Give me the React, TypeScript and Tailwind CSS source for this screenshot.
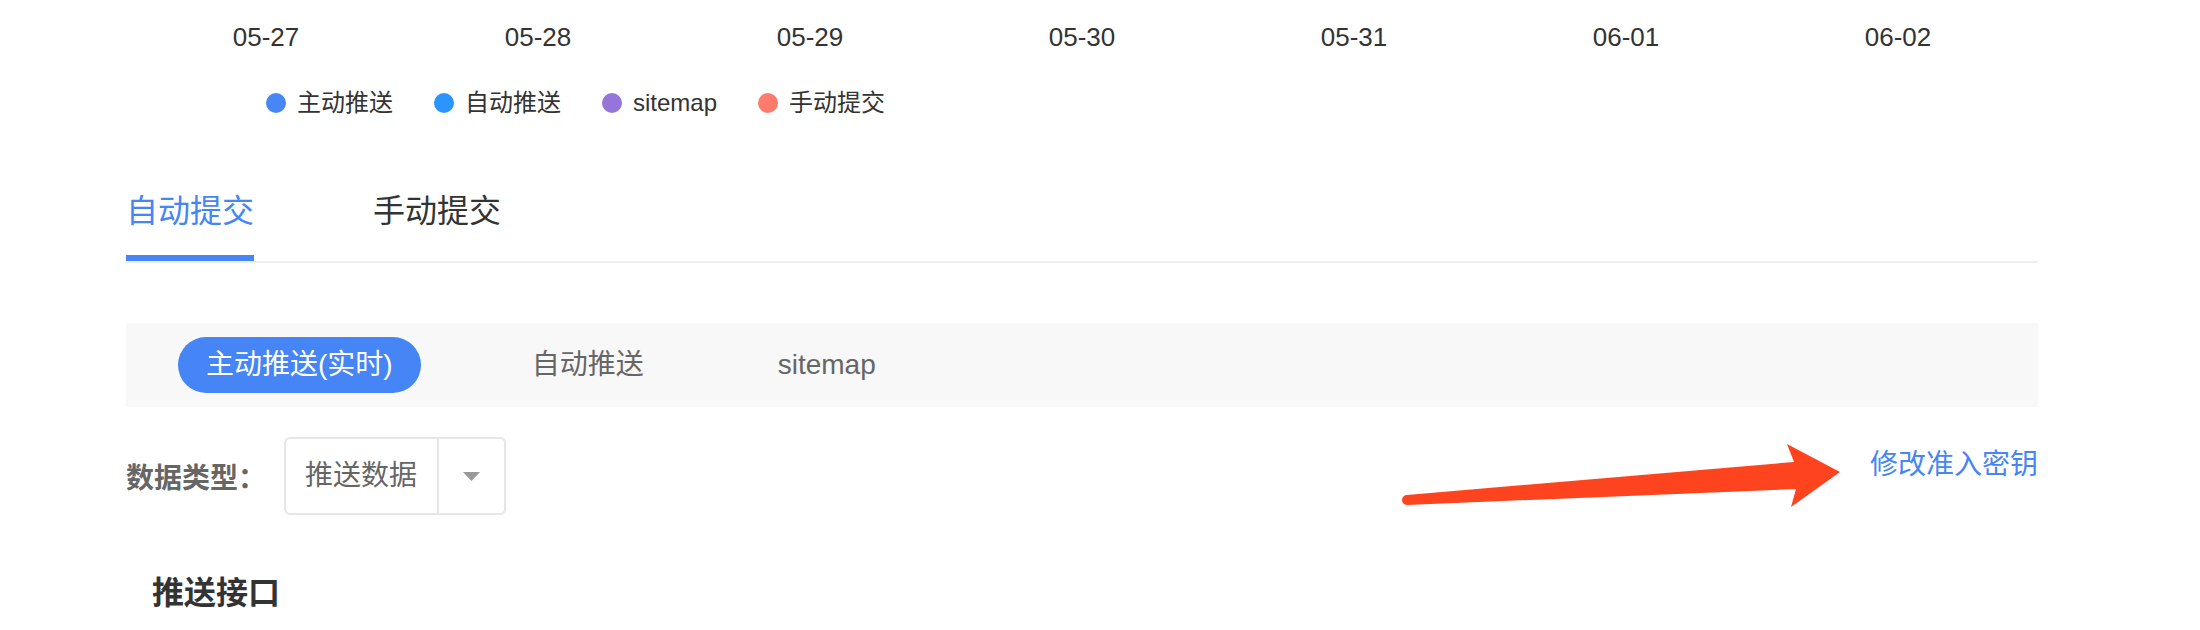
import React from 'react';

const dates = ['05-27', '05-28', '05-29', '05-30', '05-31', '06-01', '06-02'];
const legend = [
  { c: 'bg-[#4687f5]', t: '主动推送' },
  { c: 'bg-[#2b95fd]', t: '自动推送' },
  { c: 'bg-[#9575d9]', t: 'sitemap' },
  { c: 'bg-[#ff7b6b]', t: '手动提交' },
];

export default function App() {
  return (
    <div className="relative w-[2200px] h-[630px] bg-white overflow-hidden font-['Liberation_Sans','Noto_Sans_CJK_SC',sans-serif]">
      <div className="ml-[126px] w-[1912px]">
        {/* axis labels */}
        <div className="h-[73px] flex items-center ml-[4px]">
          {dates.map((d) => (
            <div key={d} className="w-[272px] text-center text-[26px] leading-[26px] text-[#333]">
              {d}
            </div>
          ))}
        </div>
        {/* legend */}
        <div className="h-[60px] flex items-center ml-[140px] gap-[41px]">
          {legend.map((l) => (
            <div key={l.t} className="flex items-center">
              <span className={`w-5 h-5 rounded-full ${l.c}`} />
              <span className="ml-[11px] text-[24px] leading-[24px] text-[#333]">{l.t}</span>
            </div>
          ))}
        </div>
        {/* main tabs */}
        <div className="mt-[62px] flex border-b-2 border-[#eeeeee]">
          <div className="flex flex-col">
            <span className="text-[32px] leading-[32px] text-[#4585f5]">自动提交</span>
            <span className="mt-[28px] h-[6px] bg-[#4585f5]" />
          </div>
          <div className="flex flex-col ml-[119px]">
            <span className="text-[32px] leading-[32px] text-[#333]">手动提交</span>
            <span className="mt-[28px] h-[6px]" />
          </div>
        </div>
        {/* sub tabs */}
        <div className="mt-[60px] h-[84px] bg-[#f8f8f8] flex items-center pl-[52px]">
          <div className="h-[56px] px-[28px] rounded-full bg-[#4585f5] text-white text-[28px] leading-[28px] flex items-center">
            主动推送(实时)
          </div>
          <div className="ml-[111px] text-[28px] leading-[28px] text-[#666]">自动推送</div>
          <div className="ml-[134px] text-[28px] leading-[28px] text-[#666]">sitemap</div>
        </div>
        {/* filter row */}
        <div className="mt-[30px] h-[78px] flex items-center">
          <span className="mt-[6px] text-[28px] leading-[28px] font-bold text-[#666]">数据类型：</span>
          <div className="ml-[18px] w-[222px] h-[78px] border-2 border-[#e6e6e6] rounded-[6px] flex">
            <div className="w-[151px] h-full flex items-center pl-[19px] text-[28px] leading-[28px] text-[#666]">
              推送数据
            </div>
            <div className="flex-1 h-full border-l-2 border-[#e6e6e6] flex items-center justify-center">
              <svg width="17" height="9" viewBox="0 0 17 9">
                <polygon points="0,0 17,0 8.5,9" fill="#999" />
              </svg>
            </div>
          </div>
          <div className="ml-auto self-start mt-[14px] text-[28px] leading-[28px] text-[#4585f5]">修改准入密钥</div>
        </div>
        {/* section title */}
        <div className="mt-[62px] ml-[26px] text-[32px] leading-[32px] font-bold text-[#333]">推送接口</div>
      </div>

      {/* annotation arrow */}
      <svg
        className="absolute left-0 top-0 pointer-events-none"
        width="2200"
        height="630"
        viewBox="0 0 2200 630"
      >
        <polygon
          points="1407,495 1794,462 1787,444 1840,472 1791,507 1796,489 1407,505"
          fill="#fe441e"
        />
        <circle cx="1407" cy="500" r="5" fill="#fe441e" />
      </svg>
    </div>
  );
}
